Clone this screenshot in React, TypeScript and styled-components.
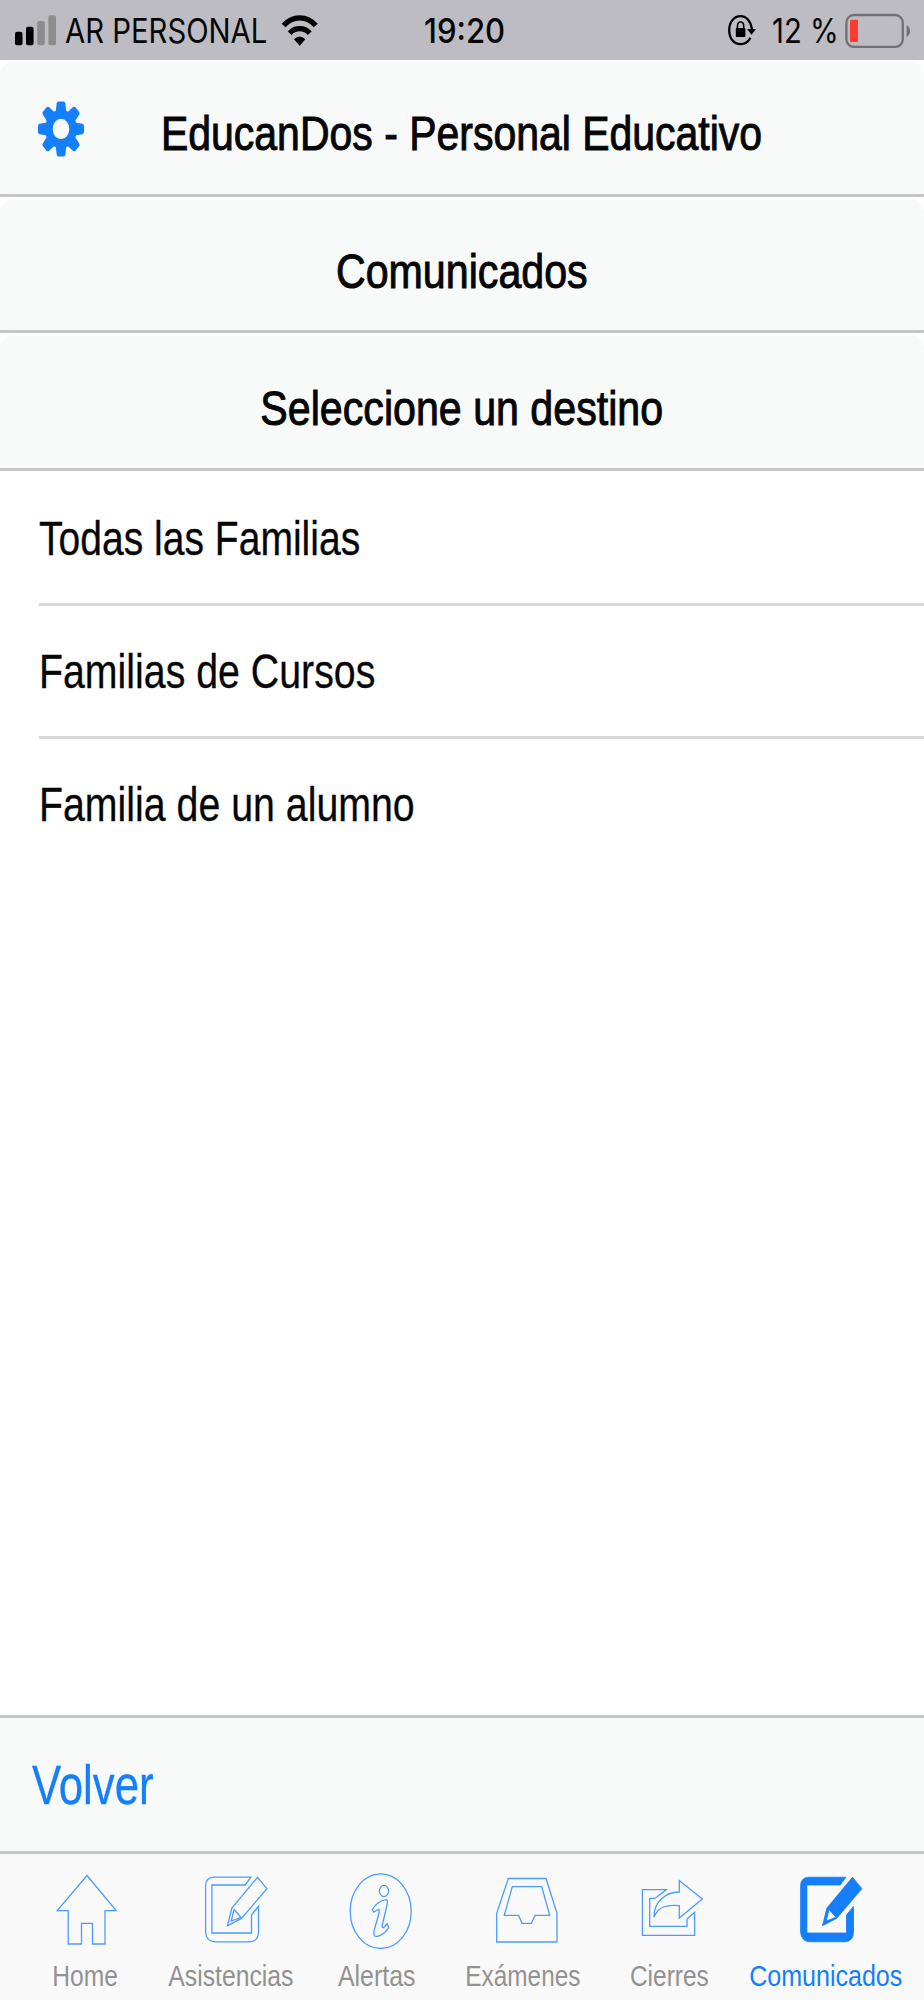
import React from "react";
import styled, { createGlobalStyle } from "styled-components";

const BLUE = "#147efb";
const LINE = "#c6c6c6";

const GlobalStyle = createGlobalStyle`
  body { margin: 0; background: #fff; }
  * { box-sizing: border-box; }
`;

const Screen = styled.div`
  width: 924px;
  height: 2000px;
  display: flex;
  flex-direction: column;
  background: #fff;
  overflow: hidden;
  font-family: "Liberation Sans", Arial, sans-serif;
  color: #060606;
`;

/* Condensed text: the glyphs are narrowed horizontally by the given ratio. */
const Narrow = styled.span<{ $ratio: number; $origin?: string; $weight?: number }>`
  display: inline-block;
  white-space: nowrap;
  transform: scaleX(${(p) => p.$ratio});
  transform-origin: ${(p) => p.$origin ?? "left"} center;
  -webkit-text-stroke: ${(p) => p.$weight ?? 0}px currentColor;
`;

const StatusBar = styled.div`
  height: 60px;
  flex: none;
  display: flex;
  align-items: flex-start;
  background: #bdbcc2;
  font-family: Inter, "Liberation Sans", sans-serif;
  font-size: 34px;
  line-height: 60px;
`;

const StatusIcon = styled.svg<{ $gap?: number }>`
  display: block;
  flex: none;
  margin-left: ${(p) => p.$gap ?? 0}px;
`;

const StatusText = styled.div<{ $width: number; $gap: number; $weight?: number }>`
  width: ${(p) => p.$width}px;
  margin-left: ${(p) => p.$gap}px;
  padding-top: 1px;
  flex: none;
  font-weight: ${(p) => p.$weight ?? 400};
`;

const Header = styled.header<{ $height: number; $shift: number }>`
  height: ${(p) => p.$height}px;
  flex: none;
  padding-top: 2px;
  border-bottom: 3px solid ${LINE};
  > div { padding-top: ${(p) => p.$shift}px; }
`;

const HeaderPanel = styled.div`
  height: 100%;
  display: grid;
  grid-template-columns: 122px minmax(0, 1fr) 122px;
  align-items: center;
  background: #f8faf9;
  border-radius: 12px 12px 0 0 / 15px 15px 0 0;
`;

const Title = styled.h1`
  grid-column: 2;
  display: flex;
  justify-content: center;
  margin: 0;
  font-size: 49px;
  line-height: 60px;
  font-weight: 400;
`;

const SettingsButton = styled.button`
  grid-column: 1;
  grid-row: 1;
  justify-self: center;
  padding: 0;
  margin-bottom: 8px;
  border: 0;
  background: none;
  svg { display: block; }
`;

const List = styled.ul`
  flex: 1;
  margin: 0;
  padding: 0 0 0 39px;
  list-style: none;
`;

const Item = styled.li<{ $height: number; $line: boolean; $shift: number }>`
  height: ${(p) => p.$height}px;
  display: flex;
  align-items: center;
  padding-top: ${(p) => p.$shift}px;
  border-bottom: ${(p) => (p.$line ? 3 : 0)}px solid #d6d6db;
  font-size: 49px;
  line-height: 56px;
`;

const BackBar = styled.div`
  height: 139px;
  flex: none;
  display: flex;
  align-items: center;
  padding: 1px 32px 0;
  border-top: 3px solid ${LINE};
  border-bottom: 3px solid ${LINE};
  background: #f8faf9;
  color: ${BLUE};
  font-size: 55px;
`;

const TabBar = styled.nav`
  height: 146px;
  flex: none;
  display: grid;
  grid-template-columns: repeat(5, 146px) 168px;
  padding-left: 12px;
  background: #f9f9f9;
`;

const Tab = styled.div<{ $active?: boolean }>`
  display: flex;
  flex-direction: column;
  align-items: center;
  gap: 1px;
  padding-top: 12px;
  color: ${(p) => (p.$active ? BLUE : "#929292")};
  font-size: 30px;
  line-height: 50px;
`;

const TabIcon = styled.svg<{ $solid?: boolean }>`
  display: block;
  width: 84px;
  height: 84px;
  flex: none;
  fill: ${(p) => (p.$solid ? BLUE : "none")};
  fill-rule: evenodd;
  stroke: ${(p) => (p.$solid ? BLUE : "#4c9cff")};
  stroke-width: ${(p) => (p.$solid ? 0.8 : 1.3)};
`;

const Gear = () => (
  <svg width="48" height="58" viewBox="-24 -29 48 58" fill={BLUE}>
    <g transform="scale(1 1.2)">
      {[0, 45, 90, 135, 180, 225, 270, 315].map((a) => (
        <path key={a} transform={`rotate(${a})`} d="M-5.6-12L-4.3-21.5Q-4-23-2.6-23H2.6Q4-23 4.3-21.5L5.6-12Z" />
      ))}
      <path fillRule="evenodd" d="M-16 0a16 16 0 1 0 32 0a16 16 0 1 0-32 0ZM-8.3 0a8.3 8.5 0 1 0 16.6 0a8.3 8.5 0 1 0-16.6 0Z" />
    </g>
  </svg>
);

const Compose = () => (
  <g transform="translate(-0.8 0)">
    <path d="M62.7 11.2H25Q17.4 12 17.4 20V66Q18 75 26 75.8H62Q70.3 75 70.3 66V40.3L63.3 49V67H23.7V19H57Z" />
    <path d="M69.3 11.3L78.7 22.7L53.3 52.4L39.3 59.7L43.7 42ZM45.9 43.5L43 55L52.7 51.3Z" />
  </g>
);

const tabs = [
  {
    label: "Home",
    ratio: 0.82,
    icon: <path d="M44 9.5L73.2 44.6H62V78H49.5V57.3H38.5V78H25.2V44.6H14.2Z" />,
  },
  { label: "Asistencias", ratio: 0.825, icon: <Compose /> },
  {
    label: "Alertas",
    ratio: 0.83,
    icon: (
      <>
        <ellipse cx="45.7" cy="45.2" rx="30.5" ry="37.3" />
        <ellipse cx="49" cy="25" rx="4.6" ry="5.6" />
        <path d="M51.5 33.7C46 34 40 38.5 37.2 43.5L38.8 46.2L43 43.5C44.5 43 44.3 45 43.8 48L39.2 64C38.2 69.5 39.5 71 42.5 70.3C46.5 69.5 51.5 66 53.7 61.5L52.2 57.8L48.8 61.5C47.2 62.3 46.8 61 47.3 59L52 39C52.8 35.5 52.5 34 51.5 33.7Z" />
      </>
    ),
  },
  {
    label: "Exámenes",
    ratio: 0.812,
    icon: (
      <>
        <path d="M27.3 12.5H65L76 47.3V76H15.7V47.3Z" />
        <path d="M31.3 20.6H60.7L68.7 49.4H54L50.3 57.4H41L37.7 49.4H23.3Z" />
      </>
    ),
  },
  {
    label: "Cierres",
    ratio: 0.815,
    icon: (
      <>
        <path d="M39.3 23.6H15.4V69.4H67.6V46.3L60 53V60.3H22.7V32.4H28Z" />
        <path d="M52.3 14.5L75.3 33L52.3 52V39.6C40 38.3 31 40.5 27 51.3C26.5 37 38 26 52.3 26Z" />
      </>
    ),
  },
  { label: "Comunicados", ratio: 0.835, active: true, icon: <Compose /> },
];

export default function App() {
  return (
    <Screen>
      <GlobalStyle />
      <StatusBar>
        <StatusIcon $gap={15} width="42" height="60" viewBox="15 0 42 60">
          <rect x="15" y="31.7" width="7.5" height="13.5" rx="2" />
          <rect x="26" y="26.8" width="7.6" height="18.4" rx="2" />
          <rect x="37.2" y="21" width="7.6" height="24.2" rx="2" fill="#8d8d90" />
          <rect x="48.4" y="15.3" width="7.6" height="29.9" rx="2" fill="#8d8d90" />
        </StatusIcon>
        <StatusText $gap={8} $width={216}>
          <Narrow $ratio={0.861}>AR PERSONAL</Narrow>
        </StatusText>
        <StatusIcon width="38" height="60" viewBox="281 0 38 60" fill="none" stroke="#000" strokeWidth="5.2">
          <path d="M283.6 25.5C292.5 15.2 307 15.2 315.8 25.5" />
          <path d="M289.7 33.2C295 27.2 304.4 27.2 309.7 33.2" />
          <path d="M294 39.3Q299.7 33.7 305.4 39.3L299.7 45.8Z" fill="#000" stroke="none" />
        </StatusIcon>
        <StatusText $gap={105} $width={84} $weight={500}>
          <Narrow $ratio={0.915}>19:20</Narrow>
        </StatusText>
        <StatusIcon $gap={218} width="32" height="60" viewBox="725 0 32 60" fill="none" stroke="#000" strokeWidth="2.3">
          <path d="M751 29C750 21.5 745.5 16.2 739.5 16.2C733 16.2 728.2 22 728.2 30.2C728.2 38.5 733 44.2 739.5 44.2C743.8 44.2 747.4 41.8 749.4 37.8" />
          <path d="M746 29H755L750.5 34.7Z" fill="#000" stroke="none" />
          <rect x="734.8" y="28" width="9.6" height="9" rx="1" fill="#000" stroke="none" />
          <path d="M736.5 29V26Q736.5 22 739.6 22Q742.7 22 742.7 26V29" strokeWidth="1.6" />
        </StatusIcon>
        <StatusText $gap={14} $width={72}>
          <Narrow $ratio={0.86}>12 %</Narrow>
        </StatusText>
        <StatusIcon width="68" height="60" viewBox="843 0 68 60">
          <rect x="845.4" y="15" width="56.4" height="31.8" rx="7.5" fill="none" stroke="#717175" strokeWidth="2.3" />
          <rect x="849" y="19.8" width="8" height="22.2" rx="1" fill="#ff3b30" />
          <path d="M905.6 25Q909 27 909 31T905.6 37Z" fill="#717175" />
        </StatusIcon>
      </StatusBar>

      <Header $height={137} $shift={10}>
        <HeaderPanel>
          <SettingsButton aria-label="Ajustes"><Gear /></SettingsButton>
          <Title><Narrow $ratio={0.836} $origin="center" $weight={1}>EducanDos - Personal Educativo</Narrow></Title>
        </HeaderPanel>
      </Header>
      <Header $height={136} $shift={13}>
        <HeaderPanel>
          <Title><Narrow $ratio={0.84} $origin="center" $weight={1}>Comunicados</Narrow></Title>
        </HeaderPanel>
      </Header>
      <Header $height={138} $shift={13}>
        <HeaderPanel>
          <Title><Narrow $ratio={0.84} $origin="center" $weight={1}>Seleccione un destino</Narrow></Title>
        </HeaderPanel>
      </Header>

      <List>
        <Item $height={135} $shift={2} $line><Narrow $ratio={0.797} $weight={0.3}>Todas las Familias</Narrow></Item>
        <Item $height={133} $shift={0} $line><Narrow $ratio={0.802} $weight={0.3}>Familias de Cursos</Narrow></Item>
        <Item $height={130} $shift={0} $line={false}><Narrow $ratio={0.802} $weight={0.3}>Familia de un alumno</Narrow></Item>
      </List>

      <BackBar><Narrow $ratio={0.795} $weight={0.3}>Volver</Narrow></BackBar>

      <TabBar>
        {tabs.map((t) => (
          <Tab key={t.label} $active={t.active}>
            <TabIcon $solid={t.active} viewBox="0 0 84 84">{t.icon}</TabIcon>
            <Narrow $ratio={t.ratio} $origin="center">{t.label}</Narrow>
          </Tab>
        ))}
      </TabBar>
    </Screen>
  );
}
